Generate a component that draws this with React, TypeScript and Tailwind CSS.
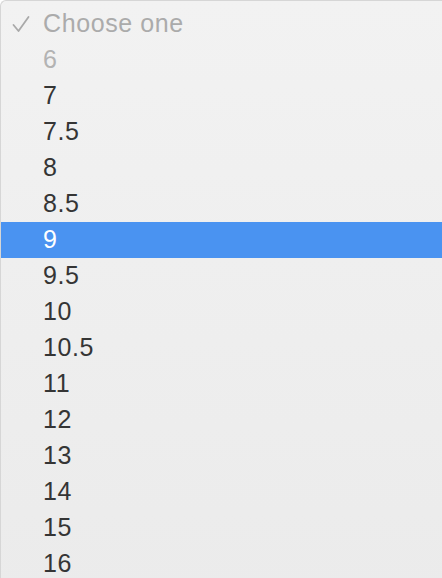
// Native-looking select popup menu with a list of shoe sizes
const sizes = ["7", "7.5", "8", "8.5", "9", "9.5", "10", "10.5", "11", "12", "13", "14", "15", "16"];

export default function App() {
  return (
    <div className="h-[578px] w-[442px] overflow-hidden bg-white">
      <div
        className="h-[600px] rounded-tl-[6px] border-l border-t border-[#d6d6d6] bg-gradient-to-b from-[#f2f2f2] to-[#ebebeb] pt-[5px] text-[25px] tracking-[0.6px] text-[#353535]"
        style={{ fontFamily: '"Liberation Sans", Arial, sans-serif' }}
      >
        {/* placeholder option, checked */}
        <div className="flex h-[36px] items-center text-[#ababab]">
          <svg className="ml-[10px] mr-[12px] h-[20px] w-[20px]" viewBox="0 0 20 20" fill="none">
            <path d="M2.5 11l5 6L17.5 3" stroke="#a9a9a9" strokeWidth="1.8" strokeLinecap="round" strokeLinejoin="round" />
          </svg>
          <span>Choose one</span>
        </div>
        {/* disabled option */}
        <div className="flex h-[36px] items-center pl-[42px] text-[#b3b3b3]">6</div>
        {sizes.map((s) =>
          s === "9" ? (
            <div key={s} className="flex h-[36px] items-center bg-[#4a93f1] pl-[42px] text-white">
              {s}
            </div>
          ) : (
            <div key={s} className="flex h-[36px] items-center pl-[42px]">
              {s}
            </div>
          )
        )}
      </div>
    </div>
  );
}
